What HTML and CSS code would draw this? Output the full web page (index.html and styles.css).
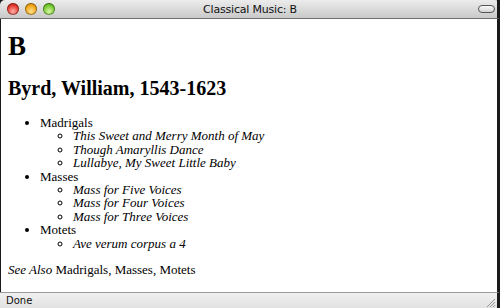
FILE: index.html
```html
<!DOCTYPE html>
<html lang="en">
<head>
    <meta charset="UTF-8">
    <title>Classical Music: B</title>
    <link rel="stylesheet" href="styles.css">
</head>
<body>
    <div class="window">
        <div class="titlebar">
            <div class="lights">
                <span class="light red"></span>
                <span class="light amber"></span>
                <span class="light green"></span>
            </div>
            <div class="title">Classical Music: B</div>
            <div class="controls">
                <span class="pill"></span>
            </div>
        </div>

        <div class="page">
            <h1>B</h1>
            <h2>Byrd, William, 1543-1623</h2>
            <ul class="works">
                <li>Madrigals
                    <ul>
                        <li>This Sweet and Merry Month of May</li>
                        <li>Though Amaryllis Dance</li>
                        <li>Lullabye, My Sweet Little Baby</li>
                    </ul>
                </li>
                <li>Masses
                    <ul>
                        <li>Mass for Five Voices</li>
                        <li>Mass for Four Voices</li>
                        <li>Mass for Three Voices</li>
                    </ul>
                </li>
                <li>Motets
                    <ul>
                        <li>Ave verum corpus a 4</li>
                    </ul>
                </li>
            </ul>
            <p class="see-also"><em>See Also</em> Madrigals, Masses, Motets</p>
        </div>

        <div class="statusbar">
            <span>Done</span>
            <svg class="grip" width="12" height="12" viewBox="0 0 12 12">
                <path d="M11 3 L3 11 M11 6 L6 11 M11 9 L9 11" stroke="#9a9a9a" stroke-width="1"/>
            </svg>
        </div>
    </div>
</body>
</html>
```

FILE: styles.css
```css
body {
    margin: 0;
    background-color: #1a1a1a;
    font-family: "Liberation Serif", "Times New Roman", serif;
}

.window {
    width: 500px;
    height: 308px;
    display: flex;
    flex-direction: column;
    overflow: hidden;
    border-radius: 5px 5px 0 0;
}

.titlebar {
    height: 18px;
    display: grid;
    grid-template-columns: 1fr auto 1fr;
    align-items: center;
    background: linear-gradient(#ececec, #c9c9c9);
    border-bottom: 1px solid #6e6e6e;
    border-right: 3px solid #1a1a1a;
}

.lights {
    display: flex;
    gap: 6px;
    padding-left: 7px;
}

.light {
    width: 12px;
    height: 12px;
    border-radius: 50%;
    box-shadow: inset 0 0 0 1px rgba(0, 0, 0, 0.35);
}

.red {
    background: radial-gradient(circle at 50% 70%, #ffb0a8, #e2342a 60%, #a9140c);
}

.amber {
    background: radial-gradient(circle at 50% 70%, #ffe08a, #f0a214 60%, #b26a05);
}

.green {
    background: radial-gradient(circle at 50% 70%, #d8f7a0, #6fc52a 60%, #3b850e);
}

.title {
    font-family: "DejaVu Sans", sans-serif;
    font-size: 11px;
    letter-spacing: -0.2px;
    color: #111;
    padding-left: 3px;
}

.controls {
    display: flex;
    justify-content: flex-end;
    padding-right: 2px;
}

.pill {
    width: 15px;
    height: 6px;
    border: 1px solid #555;
    border-radius: 4px;
    background: linear-gradient(#fafafa, #d4d4d4);
}

.page {
    flex: 1;
    background-color: #fff;
    border-left: 1px solid #1a1a1a;
    border-right: 3px solid #1a1a1a;
    padding: 0 7px;
    color: #000;
    font-size: 13px;
    line-height: 13.4px;
}

.page h1 {
    font-size: 27px;
    line-height: 30px;
    margin: 12px 0 16px;
}

.page h2 {
    font-size: 20px;
    line-height: 23px;
    margin: 0 0 16px;
}

.works {
    margin: 0;
    padding-left: 32px;
}

.works ul {
    margin: 0;
    padding-left: 33px;
    list-style-type: circle;
    font-style: italic;
}

.see-also {
    margin: 13px 0 0;
}

.statusbar {
    height: 15px;
    display: flex;
    align-items: center;
    justify-content: space-between;
    padding-left: 6px;
    background: linear-gradient(#f0f0f0, #e2e2e2);
    border-top: 1px solid #9a9a9a;
    border-right: 3px solid #1a1a1a;
    font-family: "DejaVu Sans", sans-serif;
    font-size: 10px;
    color: #111;
}

.grip {
    align-self: flex-end;
    margin-right: 1px;
}
```
